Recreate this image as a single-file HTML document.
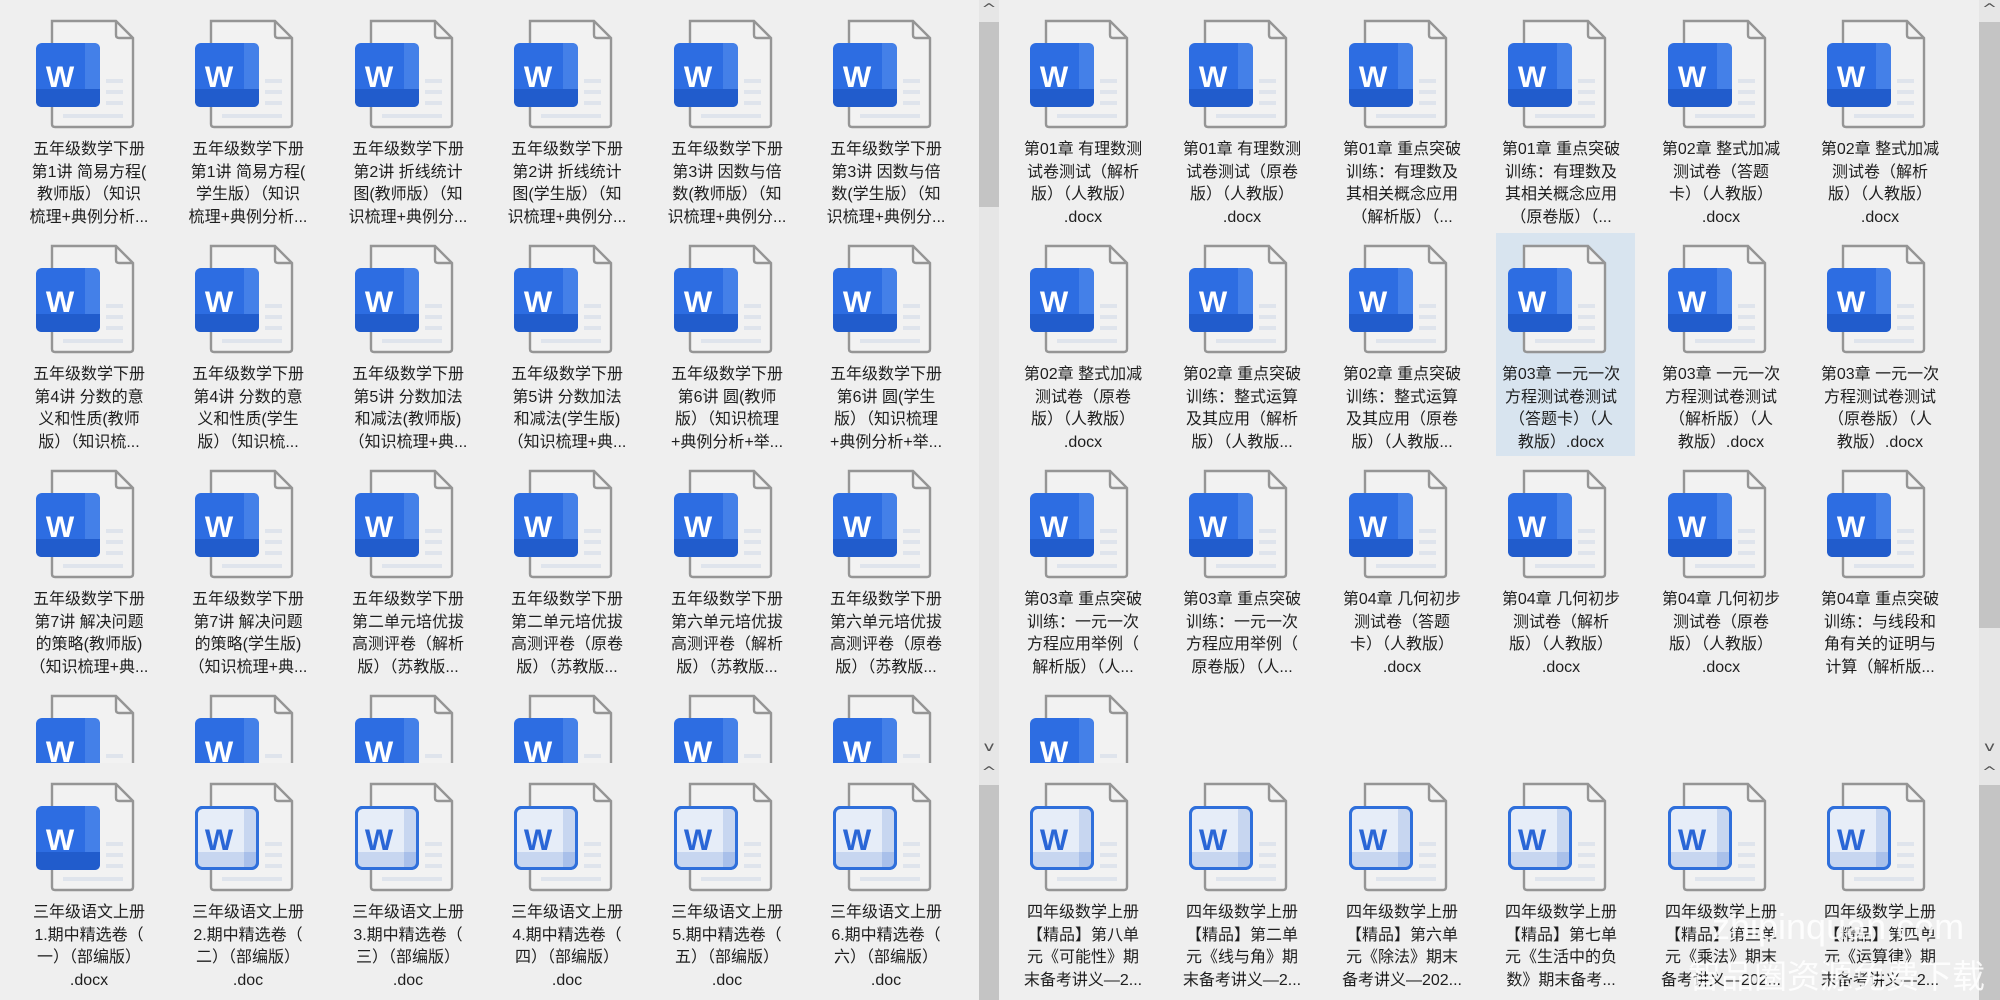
<!DOCTYPE html>
<html><head><meta charset="utf-8"><style>
*{margin:0;padding:0;box-sizing:border-box}
body{width:2000px;height:1000px;background:#efefef;position:relative;overflow:hidden;font-family:"Liberation Sans","Noto Sans CJK SC",sans-serif;color:#1e1e1e}
.pane{position:absolute;overflow:hidden;background:#efefef}
.c{position:absolute;width:150px;height:230px}
.c svg{position:absolute;left:22px;top:0}
.t{position:absolute;left:-6px;width:162px;top:120px;text-align:center;font-size:16px;line-height:22.6px;white-space:nowrap}
.sel{position:absolute;background:#d8e4ef}
.sb{position:absolute;background:#e6e6e6}
.th{position:absolute;background:#c4c4c4;left:0;right:0}
.ar{position:absolute;left:0;right:0;text-align:center;font-size:13px;color:#555;font-family:"DejaVu Sans",sans-serif;transform:scaleX(1.4)}
.wm{position:absolute;color:rgba(255,255,255,0.85);font-family:"Liberation Sans","Noto Sans CJK SC",sans-serif;white-space:nowrap}
</style></head><body>
<svg width="0" height="0" style="position:absolute">
<defs>
<g id="doc">
<path d="M16 2 H80 L97 19 V105 Q97 108 94 108 H19 Q16 108 16 105 Z" fill="#f2f2f2" stroke="#959595" stroke-width="2.4"/>
<path d="M80 2 V16 Q80 19 83 19 H97" fill="none" stroke="#959595" stroke-width="2.4"/>
<rect x="70" y="60" width="17" height="4" fill="#dfe4ec"/>
<rect x="70" y="71" width="17" height="4" fill="#dfe4ec"/>
<rect x="70" y="82" width="17" height="4" fill="#dfe4ec"/>
<rect x="27" y="95" width="60" height="4" fill="#dfe4ec"/>
</g>
<g id="ws"><use href="#doc"/>
<rect x="0" y="24" width="64" height="64" rx="6" fill="#2d6de2"/>
<path d="M49 24 H58 Q64 24 64 30 V82 Q64 88 58 88 H49 Z" fill="#4480e8"/>
<path d="M0 70 H64 V82 Q64 88 58 88 H6 Q0 88 0 82 Z" fill="#215ccc"/>
<text x="24" y="68" text-anchor="middle" font-family="Liberation Sans,sans-serif" font-weight="bold" font-size="30" fill="#fff">W</text>
</g>
<g id="wo"><use href="#doc"/>
<rect x="1.5" y="25.5" width="61" height="61" rx="6" fill="#e6edf8" stroke="#2f6fdb" stroke-width="3"/>
<rect x="49" y="27" width="12" height="58" fill="#c7d6f0"/>
<rect x="3" y="70" width="58" height="15" fill="#c7d6f0"/>
<rect x="49" y="70" width="12" height="15" fill="#a9c0ea"/>
<rect x="1.5" y="25.5" width="61" height="61" rx="6" fill="none" stroke="#2f6fdb" stroke-width="3"/>
<text x="24" y="68" text-anchor="middle" font-family="Liberation Sans,sans-serif" font-weight="bold" font-size="30" fill="#2a66d6">W</text>
</g>
</defs></svg>

<!-- LEFT TOP -->
<div class="pane" style="left:0;top:0;width:979px;height:763px">
<div class="c" style="left:14px;top:19px"><svg width="100" height="112"><use href="#ws"/></svg><div class="t">五年级数学下册<br>第1讲 简易方程(<br>教师版）（知识<br>梳理+典例分析...</div></div>
<div class="c" style="left:173px;top:19px"><svg width="100" height="112"><use href="#ws"/></svg><div class="t">五年级数学下册<br>第1讲 简易方程(<br>学生版）（知识<br>梳理+典例分析...</div></div>
<div class="c" style="left:333px;top:19px"><svg width="100" height="112"><use href="#ws"/></svg><div class="t">五年级数学下册<br>第2讲 折线统计<br>图(教师版）（知<br>识梳理+典例分...</div></div>
<div class="c" style="left:492px;top:19px"><svg width="100" height="112"><use href="#ws"/></svg><div class="t">五年级数学下册<br>第2讲 折线统计<br>图(学生版）（知<br>识梳理+典例分...</div></div>
<div class="c" style="left:652px;top:19px"><svg width="100" height="112"><use href="#ws"/></svg><div class="t">五年级数学下册<br>第3讲 因数与倍<br>数(教师版）（知<br>识梳理+典例分...</div></div>
<div class="c" style="left:811px;top:19px"><svg width="100" height="112"><use href="#ws"/></svg><div class="t">五年级数学下册<br>第3讲 因数与倍<br>数(学生版）（知<br>识梳理+典例分...</div></div>

<div class="c" style="left:14px;top:244px"><svg width="100" height="112"><use href="#ws"/></svg><div class="t">五年级数学下册<br>第4讲 分数的意<br>义和性质(教师<br>版）（知识梳...</div></div>
<div class="c" style="left:173px;top:244px"><svg width="100" height="112"><use href="#ws"/></svg><div class="t">五年级数学下册<br>第4讲 分数的意<br>义和性质(学生<br>版）（知识梳...</div></div>
<div class="c" style="left:333px;top:244px"><svg width="100" height="112"><use href="#ws"/></svg><div class="t">五年级数学下册<br>第5讲 分数加法<br>和减法(教师版)<br>（知识梳理+典...</div></div>
<div class="c" style="left:492px;top:244px"><svg width="100" height="112"><use href="#ws"/></svg><div class="t">五年级数学下册<br>第5讲 分数加法<br>和减法(学生版)<br>（知识梳理+典...</div></div>
<div class="c" style="left:652px;top:244px"><svg width="100" height="112"><use href="#ws"/></svg><div class="t">五年级数学下册<br>第6讲 圆(教师<br>版）（知识梳理<br>+典例分析+举...</div></div>
<div class="c" style="left:811px;top:244px"><svg width="100" height="112"><use href="#ws"/></svg><div class="t">五年级数学下册<br>第6讲 圆(学生<br>版）（知识梳理<br>+典例分析+举...</div></div>

<div class="c" style="left:14px;top:469px"><svg width="100" height="112"><use href="#ws"/></svg><div class="t">五年级数学下册<br>第7讲 解决问题<br>的策略(教师版)<br>（知识梳理+典...</div></div>
<div class="c" style="left:173px;top:469px"><svg width="100" height="112"><use href="#ws"/></svg><div class="t">五年级数学下册<br>第7讲 解决问题<br>的策略(学生版)<br>（知识梳理+典...</div></div>
<div class="c" style="left:333px;top:469px"><svg width="100" height="112"><use href="#ws"/></svg><div class="t">五年级数学下册<br>第二单元培优拔<br>高测评卷（解析<br>版）（苏教版...</div></div>
<div class="c" style="left:492px;top:469px"><svg width="100" height="112"><use href="#ws"/></svg><div class="t">五年级数学下册<br>第二单元培优拔<br>高测评卷（原卷<br>版）（苏教版...</div></div>
<div class="c" style="left:652px;top:469px"><svg width="100" height="112"><use href="#ws"/></svg><div class="t">五年级数学下册<br>第六单元培优拔<br>高测评卷（解析<br>版）（苏教版...</div></div>
<div class="c" style="left:811px;top:469px"><svg width="100" height="112"><use href="#ws"/></svg><div class="t">五年级数学下册<br>第六单元培优拔<br>高测评卷（原卷<br>版）（苏教版...</div></div>

<div class="c" style="left:14px;top:694px"><svg width="100" height="112"><use href="#ws"/></svg></div>
<div class="c" style="left:173px;top:694px"><svg width="100" height="112"><use href="#ws"/></svg></div>
<div class="c" style="left:333px;top:694px"><svg width="100" height="112"><use href="#ws"/></svg></div>
<div class="c" style="left:492px;top:694px"><svg width="100" height="112"><use href="#ws"/></svg></div>
<div class="c" style="left:652px;top:694px"><svg width="100" height="112"><use href="#ws"/></svg></div>
<div class="c" style="left:811px;top:694px"><svg width="100" height="112"><use href="#ws"/></svg></div>
</div>

<!-- LEFT BOTTOM -->
<div class="pane" style="left:0;top:767px;width:979px;height:233px">
<div class="c" style="left:14px;top:15px"><svg width="100" height="112"><use href="#ws"/></svg><div class="t">三年级语文上册<br>1.期中精选卷（<br>一）（部编版）<br>.docx</div></div>
<div class="c" style="left:173px;top:15px"><svg width="100" height="112"><use href="#wo"/></svg><div class="t">三年级语文上册<br>2.期中精选卷（<br>二）（部编版）<br>.doc</div></div>
<div class="c" style="left:333px;top:15px"><svg width="100" height="112"><use href="#wo"/></svg><div class="t">三年级语文上册<br>3.期中精选卷（<br>三）（部编版）<br>.doc</div></div>
<div class="c" style="left:492px;top:15px"><svg width="100" height="112"><use href="#wo"/></svg><div class="t">三年级语文上册<br>4.期中精选卷（<br>四）（部编版）<br>.doc</div></div>
<div class="c" style="left:652px;top:15px"><svg width="100" height="112"><use href="#wo"/></svg><div class="t">三年级语文上册<br>5.期中精选卷（<br>五）（部编版）<br>.doc</div></div>
<div class="c" style="left:811px;top:15px"><svg width="100" height="112"><use href="#wo"/></svg><div class="t">三年级语文上册<br>6.期中精选卷（<br>六）（部编版）<br>.doc</div></div>
</div>

<!-- RIGHT TOP -->
<div class="pane" style="left:1000px;top:0;width:979px;height:763px">
<div class="sel" style="left:496px;top:233px;width:139px;height:223px"></div>
<div class="c" style="left:8px;top:19px"><svg width="100" height="112"><use href="#ws"/></svg><div class="t">第01章 有理数测<br>试卷测试（解析<br>版）（人教版）<br>.docx</div></div>
<div class="c" style="left:167px;top:19px"><svg width="100" height="112"><use href="#ws"/></svg><div class="t">第01章 有理数测<br>试卷测试（原卷<br>版）（人教版）<br>.docx</div></div>
<div class="c" style="left:327px;top:19px"><svg width="100" height="112"><use href="#ws"/></svg><div class="t">第01章 重点突破<br>训练：有理数及<br>其相关概念应用<br>（解析版）（...</div></div>
<div class="c" style="left:486px;top:19px"><svg width="100" height="112"><use href="#ws"/></svg><div class="t">第01章 重点突破<br>训练：有理数及<br>其相关概念应用<br>（原卷版）（...</div></div>
<div class="c" style="left:646px;top:19px"><svg width="100" height="112"><use href="#ws"/></svg><div class="t">第02章 整式加减<br>测试卷（答题<br>卡）（人教版）<br>.docx</div></div>
<div class="c" style="left:805px;top:19px"><svg width="100" height="112"><use href="#ws"/></svg><div class="t">第02章 整式加减<br>测试卷（解析<br>版）（人教版）<br>.docx</div></div>

<div class="c" style="left:8px;top:244px"><svg width="100" height="112"><use href="#ws"/></svg><div class="t">第02章 整式加减<br>测试卷（原卷<br>版）（人教版）<br>.docx</div></div>
<div class="c" style="left:167px;top:244px"><svg width="100" height="112"><use href="#ws"/></svg><div class="t">第02章 重点突破<br>训练：整式运算<br>及其应用（解析<br>版）（人教版...</div></div>
<div class="c" style="left:327px;top:244px"><svg width="100" height="112"><use href="#ws"/></svg><div class="t">第02章 重点突破<br>训练：整式运算<br>及其应用（原卷<br>版）（人教版...</div></div>
<div class="c" style="left:486px;top:244px"><svg width="100" height="112"><use href="#ws"/></svg><div class="t">第03章 一元一次<br>方程测试卷测试<br>（答题卡）（人<br>教版）.docx</div></div>
<div class="c" style="left:646px;top:244px"><svg width="100" height="112"><use href="#ws"/></svg><div class="t">第03章 一元一次<br>方程测试卷测试<br>（解析版）（人<br>教版）.docx</div></div>
<div class="c" style="left:805px;top:244px"><svg width="100" height="112"><use href="#ws"/></svg><div class="t">第03章 一元一次<br>方程测试卷测试<br>（原卷版）（人<br>教版）.docx</div></div>

<div class="c" style="left:8px;top:469px"><svg width="100" height="112"><use href="#ws"/></svg><div class="t">第03章 重点突破<br>训练：一元一次<br>方程应用举例（<br>解析版）（人...</div></div>
<div class="c" style="left:167px;top:469px"><svg width="100" height="112"><use href="#ws"/></svg><div class="t">第03章 重点突破<br>训练：一元一次<br>方程应用举例（<br>原卷版）（人...</div></div>
<div class="c" style="left:327px;top:469px"><svg width="100" height="112"><use href="#ws"/></svg><div class="t">第04章 几何初步<br>测试卷（答题<br>卡）（人教版）<br>.docx</div></div>
<div class="c" style="left:486px;top:469px"><svg width="100" height="112"><use href="#ws"/></svg><div class="t">第04章 几何初步<br>测试卷（解析<br>版）（人教版）<br>.docx</div></div>
<div class="c" style="left:646px;top:469px"><svg width="100" height="112"><use href="#ws"/></svg><div class="t">第04章 几何初步<br>测试卷（原卷<br>版）（人教版）<br>.docx</div></div>
<div class="c" style="left:805px;top:469px"><svg width="100" height="112"><use href="#ws"/></svg><div class="t">第04章 重点突破<br>训练：与线段和<br>角有关的证明与<br>计算（解析版...</div></div>

<div class="c" style="left:8px;top:694px"><svg width="100" height="112"><use href="#ws"/></svg></div>
</div>

<!-- RIGHT BOTTOM -->
<div class="pane" style="left:1000px;top:767px;width:979px;height:233px">
<div class="c" style="left:8px;top:15px"><svg width="100" height="112"><use href="#wo"/></svg><div class="t">四年级数学上册<br>【精品】第八单<br>元《可能性》期<br>末备考讲义—2...</div></div>
<div class="c" style="left:167px;top:15px"><svg width="100" height="112"><use href="#wo"/></svg><div class="t">四年级数学上册<br>【精品】第二单<br>元《线与角》期<br>末备考讲义—2...</div></div>
<div class="c" style="left:327px;top:15px"><svg width="100" height="112"><use href="#wo"/></svg><div class="t">四年级数学上册<br>【精品】第六单<br>元《除法》期末<br>备考讲义—202...</div></div>
<div class="c" style="left:486px;top:15px"><svg width="100" height="112"><use href="#wo"/></svg><div class="t">四年级数学上册<br>【精品】第七单<br>元《生活中的负<br>数》期末备考...</div></div>
<div class="c" style="left:646px;top:15px"><svg width="100" height="112"><use href="#wo"/></svg><div class="t">四年级数学上册<br>【精品】第三单<br>元《乘法》期末<br>备考讲义—202...</div></div>
<div class="c" style="left:805px;top:15px"><svg width="100" height="112"><use href="#wo"/></svg><div class="t">四年级数学上册<br>【精品】第四单<br>元《运算律》期<br>末备考讲义—2...</div></div>
</div>

<!-- scrollbars -->
<div class="sb" style="left:979px;top:0;width:20px;height:763px"><div class="ar" style="top:2px">^</div><div class="th" style="top:22px;height:185px"></div><div class="ar" style="top:740px">v</div></div>
<div class="sb" style="left:979px;top:763px;width:20px;height:237px"><div class="ar" style="top:2px">^</div><div class="th" style="top:22px;height:215px"></div></div>
<div class="sb" style="left:1979px;top:0;width:21px;height:763px"><div class="ar" style="top:2px">^</div><div class="th" style="top:22px;height:606px"></div><div class="ar" style="top:740px">v</div></div>
<div class="sb" style="left:1979px;top:763px;width:21px;height:237px"><div class="ar" style="top:2px">^</div><div class="th" style="top:22px;height:215px"></div></div>

<div class="wm" style="left:1712px;top:906px;font-size:36px">zhipinquan.com</div>
<div class="wm" style="left:1688px;top:950px;font-size:33px">智品圈资源免费下载</div>
</body></html>
